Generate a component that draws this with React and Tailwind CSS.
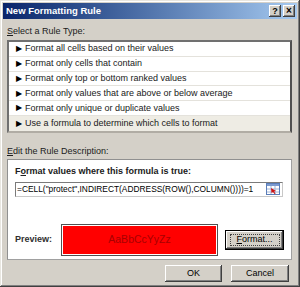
const rules = [
  "Format all cells based on their values",
  "Format only cells that contain",
  "Format only top or bottom ranked values",
  "Format only values that are above or below average",
  "Format only unique or duplicate values",
  "Use a formula to determine which cells to format",
];

function RangeIcon() {
  return (
    <svg width="14" height="12" viewBox="0 0 14 12">
      <rect x="0.5" y="0.5" width="13" height="11" fill="#ffffff" stroke="#5a7db8" />
      <rect x="1" y="1" width="12" height="2" fill="#7b9ad0" />
      <line x1="1" y1="6" x2="13" y2="6" stroke="#9fb3d6" />
      <line x1="1" y1="9" x2="13" y2="9" stroke="#9fb3d6" />
      <line x1="5" y1="3" x2="5" y2="11" stroke="#9fb3d6" />
      <line x1="9" y1="3" x2="9" y2="11" stroke="#9fb3d6" />
      <path d="M5 5 L10 8 L8 8.5 L9.5 10.5 L8.5 11 L7 9 L5.5 10 Z" fill="#d01010" />
    </svg>
  );
}

function RaisedButton({ children, className = "" }) {
  return (
    <div
      className={`flex items-center justify-center bg-[#d4d0c8] shadow-[inset_-1px_-1px_#404040,inset_1px_1px_#ffffff,inset_-2px_-2px_#808080] ${className}`}
    >
      {children}
    </div>
  );
}

export default function App() {
  return (
    <div
      className="w-[300px] h-[287px] overflow-hidden bg-[#d4d0c8] text-[9px] text-black shadow-[inset_-1px_-1px_#404040,inset_1px_1px_#e8e6e0,inset_-2px_-2px_#808080,inset_2px_2px_#ffffff]"
      style={{ fontFamily: '"Liberation Sans", Arial, sans-serif' }}
    >
      {/* Title bar */}
      <div className="mx-[3px] pt-[3px]">
        <div className="flex h-[16px] items-center justify-between bg-gradient-to-r from-[#0a246a] to-[#a6caf0] pl-[3px] pr-[2px]">
          <span className="text-[9.5px] font-bold text-white">New Formatting Rule</span>
          <div className="flex gap-[2px]">
            <RaisedButton className="h-[12px] w-[12px] text-[9px] font-bold leading-none">?</RaisedButton>
            <RaisedButton className="h-[12px] w-[12px] text-[10px] font-bold leading-none">×</RaisedButton>
          </div>
        </div>
      </div>

      <div className="px-[7px] pr-[8px]">
        {/* Rule type */}
        <p className="mt-[7px] h-[11px] leading-[11px] text-[#202020]">
          <span className="underline">S</span>elect a Rule Type:
        </p>
        <div className="mt-[3px] border-2 border-t-[#707070] border-l-[#707070] border-r-[#505050] border-b-[#b0aca4] bg-white">
          {rules.map((r, i) => (
            <div
              key={r}
              className={`flex h-[14.8px] items-center gap-[3px] pl-[7px] ${
                i < rules.length - 1 ? "border-b border-[#e4e2dc]" : ""
              } ${i === rules.length - 1 ? "bg-[#eeece4]" : ""}`}
            >
              <span className="text-[7.5px] leading-none">▶</span>
              <span className="leading-none text-[#202020]">{r}</span>
            </div>
          ))}
        </div>

        {/* Rule description */}
        <p className="mt-[13px] h-[11px] leading-[11px] text-[#202020]">
          <span className="underline">E</span>dit the Rule Description:
        </p>
        <div className="mt-[2px] h-[101px] border border-t-[#909090] border-l-[#909090] border-r-[#a0a0a0] border-b-[#a0a0a0] bg-white px-[7px] pt-[6px]">
          <p className="h-[11px] font-bold leading-[11px] text-[#202020]">
            F<span className="underline">o</span>rmat values where this formula is true:
          </p>
          <div className="mt-[5px] flex h-[15px] w-[268px] items-center justify-between border border-t-[#7a7a7a] border-l-[#7a7a7a] border-r-[#c8c8c8] border-b-[#c8c8c8] bg-white pl-[1px] pr-[2px]">
            <span className="text-[8.4px] leading-none">=CELL("protect",INDIRECT(ADDRESS(ROW(),COLUMN())))=1</span>
            <RangeIcon />
          </div>

          <div className="mt-[27px] flex items-center">
            <span className="w-[46px] font-bold text-[#303030]">Preview:</span>
            <div className="flex h-[32px] w-[157px] items-center justify-center border border-[#505050] bg-[#ff0000] shadow-[inset_1px_1px_#ffffff,inset_-1px_-1px_#ffffff]">
              <span className="text-[10.5px] text-[#a80000]">AaBbCcYyZz</span>
            </div>
            <div className="ml-[7px] h-[20px] w-[59px] border border-black">
              <RaisedButton className="h-full w-full">
                <div className="flex h-[12px] w-[50px] items-center justify-center border border-dotted border-[#404040]">
                  <span>
                    <span className="underline">F</span>ormat...
                  </span>
                </div>
              </RaisedButton>
            </div>
          </div>
        </div>

        {/* Footer buttons */}
        <div className="mt-[5px] flex justify-end gap-[9px] pr-[3px]">
          <RaisedButton className="h-[17px] w-[57px]">OK</RaisedButton>
          <RaisedButton className="h-[17px] w-[58px]">Cancel</RaisedButton>
        </div>
      </div>
    </div>
  );
}
